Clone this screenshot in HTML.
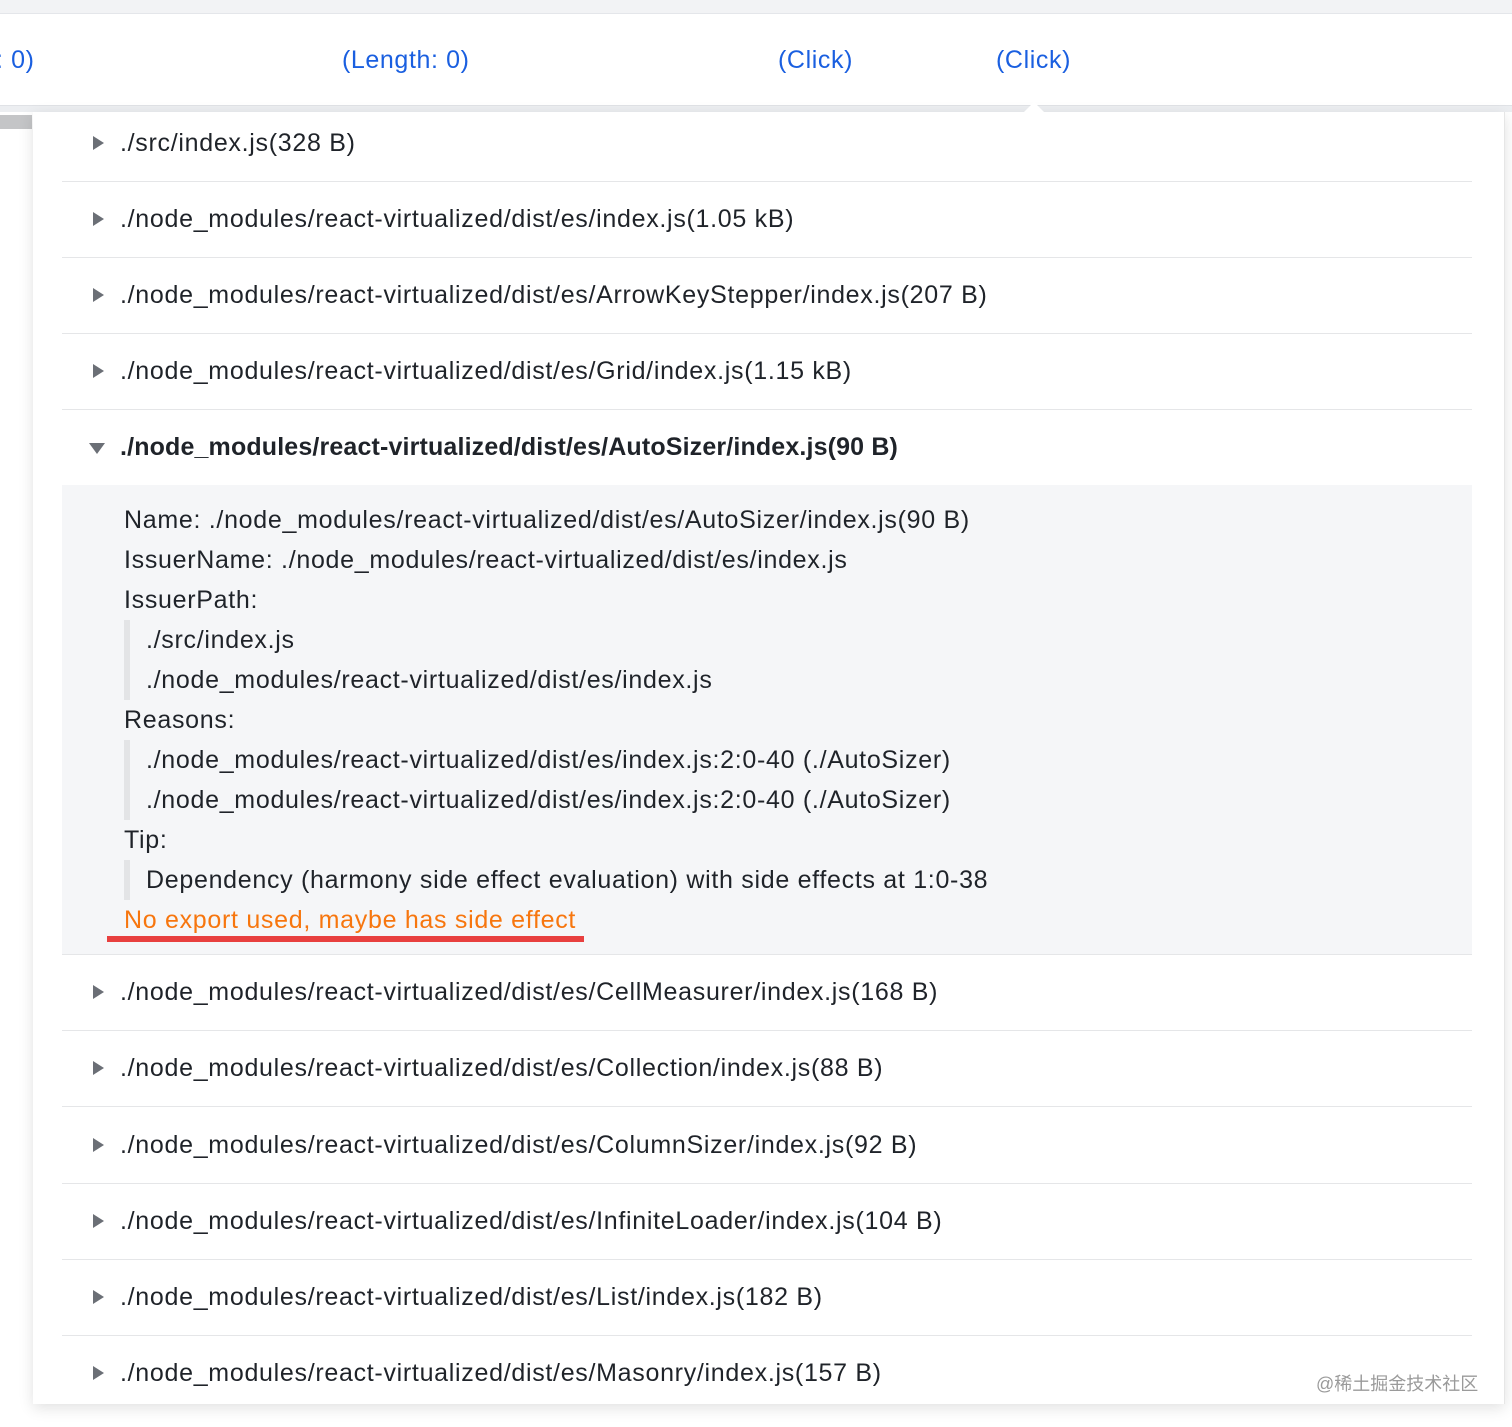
<!DOCTYPE html>
<html><head><meta charset="utf-8"><style>
*{margin:0;padding:0;box-sizing:border-box}
body{width:1512px;height:1427px;background:#fff;font-family:"Liberation Sans","Noto Sans CJK SC",sans-serif;color:#1f2329;position:relative;overflow:hidden}
.topstrip{position:absolute;left:0;top:0;width:1512px;height:14px;background:#f2f3f5;border-bottom:1px solid #e4e6ea}
.header{position:absolute;left:0;top:14px;width:1512px;height:92px;background:#fff}
.hl{position:absolute;top:32px;font-size:25px;letter-spacing:0.6px;color:#1a5fe0}
.hbar{position:absolute;left:0;top:105px;width:1512px;height:7px;background:#eceef1;border-top:1px solid #e0e2e6}
.lgray{position:absolute;left:0;top:115px;width:32px;height:14px;background:#c4c5c7}
.card{position:absolute;left:33px;top:112px;width:1472px;height:1292px;background:#fff;box-shadow:0 4px 14px rgba(0,0,0,.12);border-right:1px solid #e6e6e6}
.arrow{position:absolute;left:1024px;top:102px;width:0;height:0;border-left:10px solid transparent;border-right:10px solid transparent;border-bottom:10px solid #fff}
.row{position:absolute;left:62px;width:1410px;height:76px;border-bottom:1.5px solid #e5e6e8;font-size:25px;letter-spacing:0.7px}
.row span{position:absolute;left:58px;top:23px;white-space:nowrap}
.tri{position:absolute;left:31px;top:30px;width:0;height:0;border-top:7px solid transparent;border-bottom:7px solid transparent;border-left:11px solid #6b6f76}
.tri.down{left:27px;top:33px;border-left:8px solid transparent;border-right:8px solid transparent;border-top:11px solid #6b6f76;border-bottom:0}
.panel{position:absolute;left:62px;top:485px;width:1410px;height:470px;background:#f5f6f8;border-bottom:1.5px solid #e5e6e8;font-size:25px;letter-spacing:0.7px}
.ln{position:absolute;left:62px;white-space:nowrap;top:0}
.q{position:absolute;left:62px;width:6px;background:#e3e4e6}
.qi{position:absolute;left:84px;white-space:nowrap}
.wm{position:absolute;left:1316px;top:1370px;font-size:18px;color:#9a9a9a}
</style></head><body>
<div class="topstrip"></div>
<div class="header">
<div class="hl" style="left:-4px">: 0)</div>
<div class="hl" style="left:342px">(Length: 0)</div>
<div class="hl" style="left:778px">(Click)</div>
<div class="hl" style="left:996px">(Click)</div>
</div>
<div class="hbar"></div>
<div class="lgray"></div>
<div class="card"></div>
<div class="arrow"></div>

<div class="row" style="top:106px"><i class="tri"></i><span>./src/index.js(328 B)</span></div>
<div class="row" style="top:182px"><i class="tri"></i><span>./node_modules/react-virtualized/dist/es/index.js(1.05 kB)</span></div>
<div class="row" style="top:258px"><i class="tri"></i><span>./node_modules/react-virtualized/dist/es/ArrowKeyStepper/index.js(207 B)</span></div>
<div class="row" style="top:334px"><i class="tri"></i><span>./node_modules/react-virtualized/dist/es/Grid/index.js(1.15 kB)</span></div>
<div class="row" style="top:410px;border-bottom:none"><i class="tri down"></i><span style="font-weight:bold;letter-spacing:0.15px">./node_modules/react-virtualized/dist/es/AutoSizer/index.js(90 B)</span></div>

<div class="panel">
<div class="ln" style="top:21px">Name: ./node_modules/react-virtualized/dist/es/AutoSizer/index.js(90 B)</div>
<div class="ln" style="top:61px">IssuerName: ./node_modules/react-virtualized/dist/es/index.js</div>
<div class="ln" style="top:101px">IssuerPath:</div>
<div class="q" style="top:135px;height:80px"></div>
<div class="qi" style="top:141px">./src/index.js</div>
<div class="qi" style="top:181px">./node_modules/react-virtualized/dist/es/index.js</div>
<div class="ln" style="top:221px">Reasons:</div>
<div class="q" style="top:255px;height:80px"></div>
<div class="qi" style="top:261px">./node_modules/react-virtualized/dist/es/index.js:2:0-40 (./AutoSizer)</div>
<div class="qi" style="top:301px">./node_modules/react-virtualized/dist/es/index.js:2:0-40 (./AutoSizer)</div>
<div class="ln" style="top:341px">Tip:</div>
<div class="q" style="top:375px;height:40px"></div>
<div class="qi" style="top:381px">Dependency (harmony side effect evaluation) with side effects at 1:0-38</div>
<div class="ln" style="top:421px;color:#f7760e">No export used, maybe has side effect</div>
<div style="position:absolute;left:45px;top:451px;width:477px;height:6px;background:#e8403f"></div>
</div>

<div class="row" style="top:955px"><i class="tri"></i><span>./node_modules/react-virtualized/dist/es/CellMeasurer/index.js(168 B)</span></div>
<div class="row" style="top:1031px"><i class="tri"></i><span>./node_modules/react-virtualized/dist/es/Collection/index.js(88 B)</span></div>
<div class="row" style="top:1108px"><i class="tri"></i><span>./node_modules/react-virtualized/dist/es/ColumnSizer/index.js(92 B)</span></div>
<div class="row" style="top:1184px"><i class="tri"></i><span>./node_modules/react-virtualized/dist/es/InfiniteLoader/index.js(104 B)</span></div>
<div class="row" style="top:1260px"><i class="tri"></i><span>./node_modules/react-virtualized/dist/es/List/index.js(182 B)</span></div>
<div class="row" style="top:1336px;border-bottom:none"><i class="tri"></i><span>./node_modules/react-virtualized/dist/es/Masonry/index.js(157 B)</span></div>
<div class="wm">@稀土掘金技术社区</div>
</body></html>
